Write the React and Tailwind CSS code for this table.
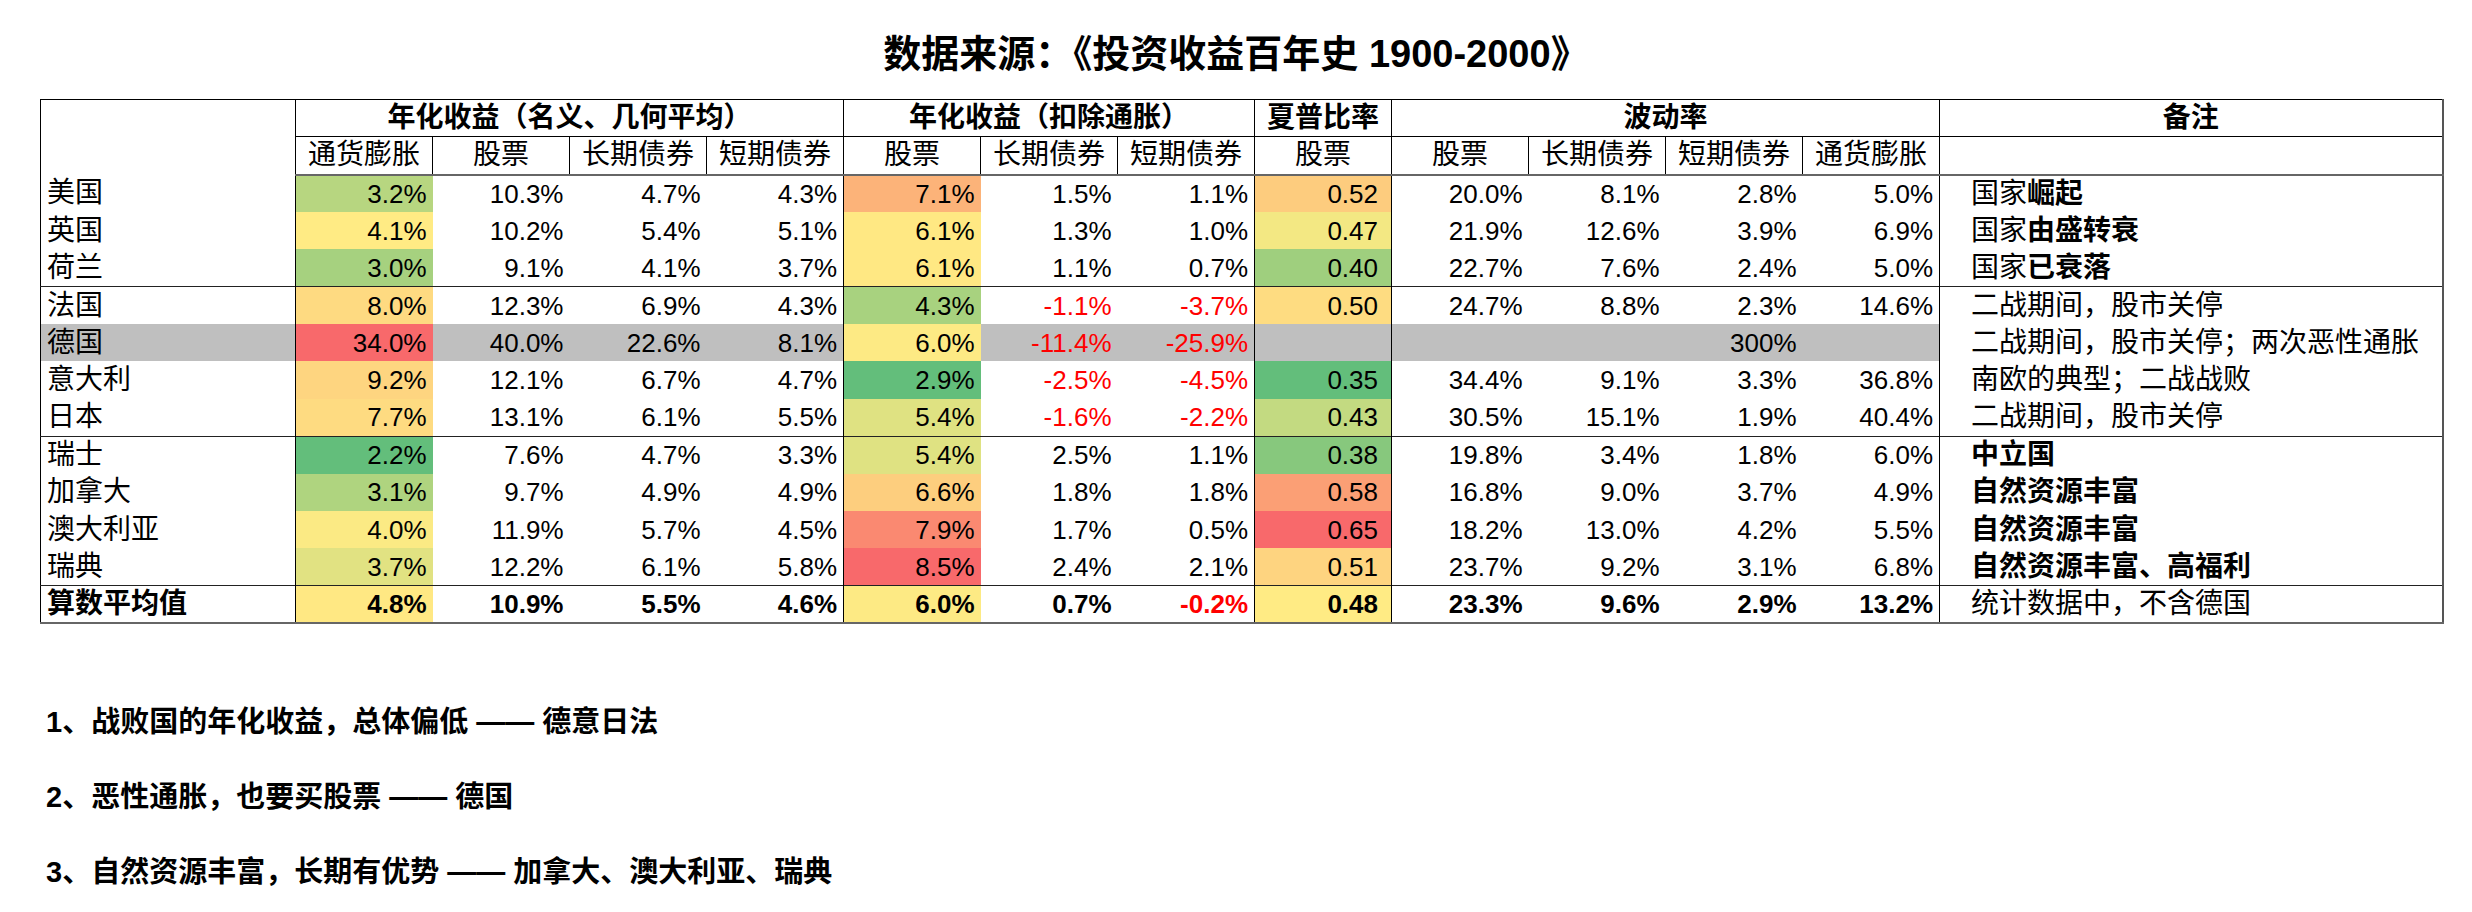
import React from "react";

const G = [99, 190, 123];
const Y = [255, 235, 132];
const R = [248, 105, 107];

function scaleColor(v, min, mid, max) {
  let c;
  if (v <= mid) {
    const t = mid === min ? 0 : (mid - v) / (mid - min);
    c = Y.map((y, i) => Math.round(y + t * (G[i] - y)));
  } else {
    const t = (v - mid) / (max - mid);
    c = Y.map((y, i) => Math.round(y + t * (R[i] - y)));
  }
  return `rgb(${c[0]},${c[1]},${c[2]})`;
}

function median(arr) {
  const s = [...arr].sort((a, b) => a - b);
  const n = s.length;
  return n % 2 ? s[(n - 1) / 2] : (s[n / 2 - 1] + s[n / 2]) / 2;
}

const rows = [
  { name: "美国", v: [3.2, 10.3, 4.7, 4.3, 7.1, 1.5, 1.1, 0.52, 20.0, 8.1, 2.8, 5.0], note: [["国家", false], ["崛起", true]] },
  { name: "英国", v: [4.1, 10.2, 5.4, 5.1, 6.1, 1.3, 1.0, 0.47, 21.9, 12.6, 3.9, 6.9], note: [["国家", false], ["由盛转衰", true]] },
  { name: "荷兰", v: [3.0, 9.1, 4.1, 3.7, 6.1, 1.1, 0.7, 0.40, 22.7, 7.6, 2.4, 5.0], note: [["国家", false], ["已衰落", true]] },
  { name: "法国", sep: true, v: [8.0, 12.3, 6.9, 4.3, 4.3, -1.1, -3.7, 0.50, 24.7, 8.8, 2.3, 14.6], note: [["二战期间，股市关停", false]] },
  { name: "德国", grey: true, v: [34.0, 40.0, 22.6, 8.1, 6.0, -11.4, -25.9, null, null, null, "300%", null], note: [["二战期间，股市关停；两次恶性通胀", false]] },
  { name: "意大利", v: [9.2, 12.1, 6.7, 4.7, 2.9, -2.5, -4.5, 0.35, 34.4, 9.1, 3.3, 36.8], note: [["南欧的典型；二战战败", false]] },
  { name: "日本", v: [7.7, 13.1, 6.1, 5.5, 5.4, -1.6, -2.2, 0.43, 30.5, 15.1, 1.9, 40.4], note: [["二战期间，股市关停", false]] },
  { name: "瑞士", sep: true, v: [2.2, 7.6, 4.7, 3.3, 5.4, 2.5, 1.1, 0.38, 19.8, 3.4, 1.8, 6.0], note: [["中立国", true]] },
  { name: "加拿大", v: [3.1, 9.7, 4.9, 4.9, 6.6, 1.8, 1.8, 0.58, 16.8, 9.0, 3.7, 4.9], note: [["自然资源丰富", true]] },
  { name: "澳大利亚", v: [4.0, 11.9, 5.7, 4.5, 7.9, 1.7, 0.5, 0.65, 18.2, 13.0, 4.2, 5.5], note: [["自然资源丰富", true]] },
  { name: "瑞典", v: [3.7, 12.2, 6.1, 5.8, 8.5, 2.4, 2.1, 0.51, 23.7, 9.2, 3.1, 6.8], note: [["自然资源丰富、高福利", true]] },
  { name: "算数平均值", sep: true, bold: true, v: [4.8, 10.9, 5.5, 4.6, 6.0, 0.7, -0.2, 0.48, 23.3, 9.6, 2.9, 13.2], note: [["统计数据中，不含德国", false]] },
];

const scaled = [0, 4, 7];
const scales = {};
scaled.forEach((ci) => {
  const vals = rows.map((r) => r.v[ci]).filter((x) => typeof x === "number");
  scales[ci] = { min: Math.min(...vals), mid: median(vals), max: Math.max(...vals) };
});

const groupEnd = new Set([3, 6, 7, 11]);

function fmt(v, ci) {
  if (v === null) return "";
  if (typeof v === "string") return v;
  if (ci === 7) return v.toFixed(2);
  return v.toFixed(1) + "%";
}

const subHeads = ["通货膨胀", "股票", "长期债券", "短期债券", "股票", "长期债券", "短期债券", "股票", "股票", "长期债券", "短期债券", "通货膨胀"];

export default function App() {
  return (
    <div className="w-[2472px] h-[912px] bg-white text-black font-['Liberation_Sans','Noto_Sans_CJK_SC',sans-serif] overflow-hidden">
      <div className="h-[99px] pt-[35px] text-center text-[38px] leading-none font-bold">
        数据来源：《投资收益百年史 1900-2000》
      </div>
      <table className="ml-[40px] w-[2402px] table-fixed border-collapse border-t border-l border-black border-r-2 border-r-[#555] border-b-2 border-b-[#666]">
        <colgroup>
          <col className="w-[255px]" />
          {subHeads.map((_, i) => (
            <col key={i} className="w-[137px]" />
          ))}
          <col className="w-[503px]" />
        </colgroup>
        <thead>
          <tr className="h-[37px]">
            <th rowSpan={2} className="border-r border-black"></th>
            <th colSpan={4} className="border-r border-b border-black text-[28px] font-bold leading-none">年化收益（名义、几何平均）</th>
            <th colSpan={3} className="border-r border-b border-black text-[28px] font-bold leading-none">年化收益（扣除通胀）</th>
            <th className="border-r border-b border-black text-[28px] font-bold leading-none">夏普比率</th>
            <th colSpan={4} className="border-r border-b border-black text-[28px] font-bold leading-none">波动率</th>
            <th className="border-b border-black text-[28px] font-bold leading-none">备注</th>
          </tr>
          <tr className="h-[38px]">
            {subHeads.map((h, i) => (
              <th key={i} className="border-r border-black border-b-2 border-b-[#666] text-[28px] font-normal leading-none whitespace-nowrap">
                {h}
              </th>
            ))}
            <th className="border-b-2 border-b-[#666]"></th>
          </tr>
        </thead>
        <tbody>
          {rows.map((r, ri) => (
            <tr key={ri} className={`h-[37.4px] ${r.sep ? "border-t border-t-[#222]" : ""}`}>
              <td className={`border-r border-black pl-[6px] text-[28px] leading-none whitespace-nowrap ${r.bold ? "font-bold" : ""} ${r.grey ? "bg-[#bfbfbf]" : ""}`}>
                {r.name}
              </td>
              {r.v.map((v, ci) => {
                let bg;
                if (scaled.includes(ci) && typeof v === "number") {
                  const s = scales[ci];
                  bg = scaleColor(v, s.min, s.mid, s.max);
                }
                const neg = typeof v === "number" && v < 0;
                return (
                  <td
                    key={ci}
                    style={bg ? { backgroundColor: bg } : undefined}
                    className={`text-right leading-none text-[26px] font-['Liberation_Sans_Narrow','Liberation_Sans',sans-serif] whitespace-nowrap ${ci === 7 ? "pr-[13px]" : "pr-[6px]"} ${groupEnd.has(ci) ? "border-r border-black" : ""} ${r.grey && !bg ? "bg-[#bfbfbf]" : ""} ${neg ? "text-[#f00]" : ""} ${r.bold ? "font-bold" : ""}`}
                  >
                    {fmt(v, ci)}
                  </td>
                );
              })}
              <td className="pl-[31px] text-[28px] leading-none whitespace-nowrap">
                {r.note.map(([t, b], k) => (
                  <span key={k} className={b ? "font-bold" : ""}>
                    {t}
                  </span>
                ))}
              </td>
            </tr>
          ))}
        </tbody>
      </table>
      <div className="pl-[46px] pt-[61px] text-[29px] font-bold leading-[75px]">
        <div>1、战败国的年化收益，总体偏低 —— 德意日法</div>
        <div>2、恶性通胀，也要买股票 —— 德国</div>
        <div>3、自然资源丰富，长期有优势 —— 加拿大、澳大利亚、瑞典</div>
      </div>
    </div>
  );
}
